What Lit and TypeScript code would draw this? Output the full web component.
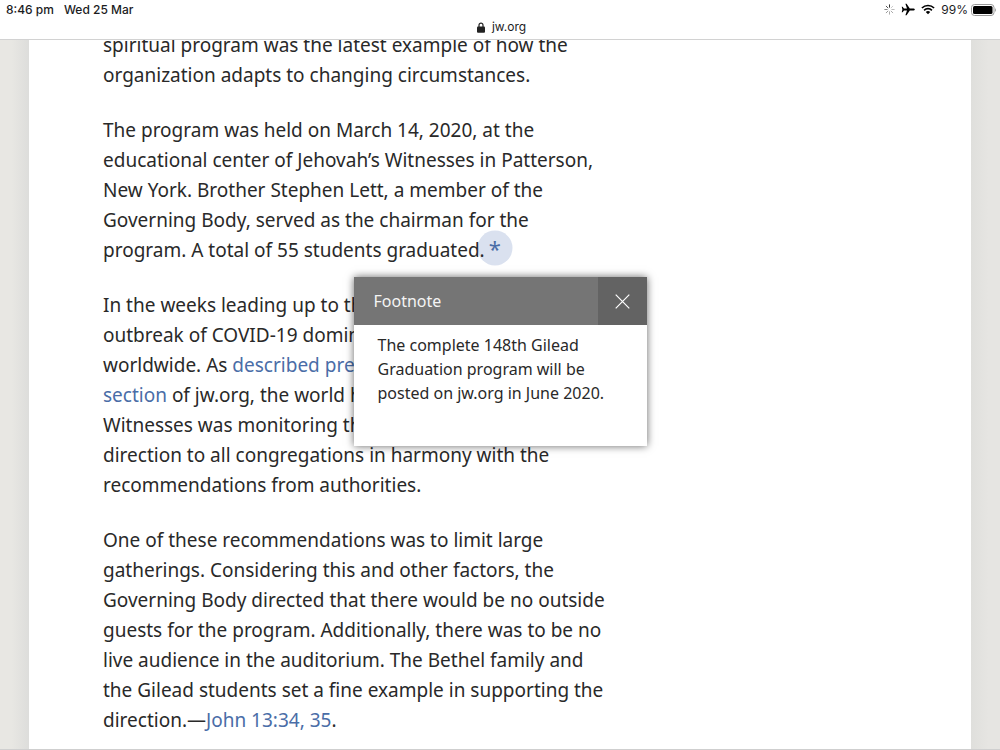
import { LitElement, html, css } from "lit";
import { customElement, state } from "lit/decorators.js";

@customElement("status-bar")
class StatusBar extends LitElement {
  static styles = css`
    :host {
      display: block;
      background: #fff;
      color: #1c1c1e;
      border-bottom: 1px solid #d2d2d2;
      font-family: Inter, "Liberation Sans", sans-serif;
      font-size: 12px;
      line-height: 16px;
    }
    .row {
      display: flex;
      justify-content: space-between;
      align-items: center;
      height: 19px;
      padding: 0 4px 0 6px;
      font-weight: 500;
    }
    .group {
      display: flex;
      align-items: center;
      gap: 10px;
    }
    .icons {
      display: flex;
      align-items: center;
      gap: 6px;
    }
    .level {
      display: flex;
      align-items: center;
      gap: 3px;
      font-weight: 400;
    }
    .address {
      display: flex;
      justify-content: center;
      align-items: center;
      gap: 7px;
      height: 16px;
      padding: 0 0 4px 3px;
    }
    svg {
      display: block;
    }
  `;

  render() {
    return html`
      <div class="row">
        <div class="group"><span>8:46 pm</span><span>Wed 25 Mar</span></div>
        <div class="icons">
          <svg width="11" height="11" viewBox="0 0 11 11" stroke-width="1" stroke-linecap="round" aria-hidden="true">
            <path d="M5.5 3.2V.8" stroke="#333" />
            <path d="M3.9 3.9 2.2 2.2" stroke="#555" />
            <path d="M3.2 5.5H.8" stroke="#888" />
            <path d="M3.9 7.1 2.2 8.8" stroke="#999" />
            <path d="M5.5 7.8v2.4" stroke="#aaa" />
            <path d="m7.1 7.1 1.7 1.7" stroke="#aaa" />
            <path d="M7.8 5.5h2.4" stroke="#bbb" />
            <path d="m7.1 3.9 1.7-1.7" stroke="#ccc" />
          </svg>
          <svg width="14" height="13" viewBox="0 0 14 13" fill="#000" aria-hidden="true">
            <path d="M13.8 6.5c0 .6-.8 1-1.9 1H8.8L5.6 12.2H4.4L6 7.5H3L1.6 9.2H.7L1.4 6.5.7 3.8h.9L3 5.5h3L4.4.8h1.2l3.2 4.7h3.1c1.1 0 1.9.4 1.9 1z" />
          </svg>
          <svg width="14" height="11" viewBox="0 0 14 11" fill="none" stroke="#000" stroke-width="1.7" aria-hidden="true">
            <path d="M.9 4a8.7 8.7 0 0 1 12.2 0" />
            <path d="M3.1 6.3a5.6 5.6 0 0 1 7.8 0" />
            <path d="M7 10.3 4.8 8.1a3.1 3.1 0 0 1 4.4 0z" fill="#000" stroke="none" />
          </svg>
          <span class="level">
            <span>99%</span>
            <svg width="25" height="12" viewBox="0 0 25 12" aria-hidden="true">
              <rect x=".5" y=".5" width="22.5" height="11" rx="3" fill="#fff" stroke="#999" />
              <rect x="2" y="2" width="19.5" height="8" rx="1.5" fill="#000" />
              <path d="M24 4.2c1.2.4 1.2 3.2 0 3.6z" fill="#999" />
            </svg>
          </span>
        </div>
      </div>
      <div class="address">
        <svg width="8" height="11" viewBox="0 0 8 11" aria-hidden="true">
          <path d="M2 5V3.2a2 2 0 0 1 4 0V5" fill="none" stroke="#222" stroke-width="1.2" />
          <rect y="4.6" width="8" height="6.2" rx="1" fill="#222" />
        </svg>
        <span>jw.org</span>
      </div>
    `;
  }
}

@customElement("footnote-popup")
class FootnotePopup extends LitElement {
  static styles = css`
    :host {
      display: block;
      background: #fff;
      box-shadow: 0 0 8px rgba(0, 0, 0, 0.6);
      color: #292929;
      font-size: 16px;
      line-height: 24px;
    }
    .head {
      display: flex;
      align-items: stretch;
      height: 48px;
      background: #757575;
      color: #fff;
    }
    .title {
      flex: 1;
      margin: 0;
      padding-left: 20px;
      font-size: 16px;
      font-weight: 400;
      line-height: 48px;
      color: #f4f4f4;
    }
    .close {
      display: grid;
      place-items: center;
      width: 49px;
      padding: 0;
      border: 0;
      background: #636363;
      color: #fff;
    }
    .text {
      margin: 0;
      padding: 8px 24px 41px;
    }
  `;

  private close() {
    this.dispatchEvent(new CustomEvent("dismiss"));
  }

  render() {
    return html`
      <div class="head">
        <h2 class="title">Footnote</h2>
        <button class="close" aria-label="Close" @click=${this.close}>
          <svg width="15" height="15" viewBox="0 0 15 15" fill="none" stroke="currentColor" stroke-width="1.2">
            <path d="m.7.7 13.6 13.6M14.3.7.7 14.3" />
          </svg>
        </button>
      </div>
      <p class="text">The complete 148th Gilead Graduation program will be posted on jw.org in June 2020.</p>
    `;
  }
}

@customElement("app-root")
class AppRoot extends LitElement {
  static styles = css`
    :host {
      display: flex;
      flex-direction: column;
      position: relative;
      height: 100vh;
      overflow: hidden;
      box-sizing: border-box;
      border-bottom: 1px solid #cfcfcf;
      background: #fff;
      font-family: "Noto Sans", sans-serif;
    }
    .bar {
      flex: none;
    }
    .view {
      flex: 1;
      min-height: 0;
      overflow: hidden;
      display: grid;
      grid-template-columns: 29px 1fr 29px;
    }
    .side {
      background: linear-gradient(to right, #e8e7e3 40%, #dddddb);
    }
    .side.right {
      background: linear-gradient(to right, #dfdfdc, #e6e5e2 60%);
    }
    .article {
      position: relative;
      z-index: 0;
      margin-top: -10px;
      padding: 0 74px;
      color: #292929;
      font-size: 19px;
      line-height: 30px;
      white-space: nowrap;
    }
    .article p {
      margin: 0 0 25px;
    }
    a {
      color: #4a6da7;
      text-decoration: none;
    }
    .mark {
      position: relative;
      margin-left: 4px;
      font-size: 22px;
      line-height: 20px;
    }
    .mark::before {
      content: "";
      position: absolute;
      z-index: -1;
      left: 50%;
      top: 50%;
      width: 35px;
      height: 35px;
      border-radius: 50%;
      background: #dae1ef;
      transform: translate(-50%, -50%);
    }
    .popup {
      position: absolute;
      z-index: 1;
      top: 277px;
      left: 0;
      right: 0;
      width: 293px;
      margin: 0 auto;
    }
  `;

  @state() private open = true;

  private show(event: Event) {
    event.preventDefault();
    this.open = true;
  }

  render() {
    return html`
      <status-bar class="bar"></status-bar>
      <main class="view">
        <div class="side"></div>
        <article class="article">
          <p>
            spiritual program was the latest example of how the<br />
            organization adapts to changing circumstances.
          </p>
          <p>
            The program was held on March 14, 2020, at the<br />
            educational center of Jehovah’s Witnesses in Patterson,<br />
            New York. Brother Stephen Lett, a member of the<br />
            Governing Body, served as the chairman for the<br />
            program. A total of 55 students graduated.<a class="mark" href="#footnote" @click=${this.show}>*</a>
          </p>
          <p>
            In the weeks leading up to the program, the<br />
            outbreak of COVID-19 dominated the news<br />
            worldwide. As <a href="#news">described previously in the news<br />
            section</a> of jw.org, the world headquarters of<br />
            Witnesses was monitoring the events, giving<br />
            direction to all congregations in harmony with the<br />
            recommendations from authorities.
          </p>
          <p>
            One of these recommendations was to limit large<br />
            gatherings. Considering this and other factors, the<br />
            Governing Body directed that there would be no outside<br />
            guests for the program. Additionally, there was to be no<br />
            live audience in the auditorium. The Bethel family and<br />
            the Gilead students set a fine example in supporting the<br />
            direction.—<a href="#john">John 13:34, 35</a>.
          </p>
        </article>
        <div class="side right"></div>
      </main>
      ${this.open
        ? html`<footnote-popup id="footnote" class="popup" @dismiss=${() => (this.open = false)}></footnote-popup>`
        : null}
    `;
  }
}
